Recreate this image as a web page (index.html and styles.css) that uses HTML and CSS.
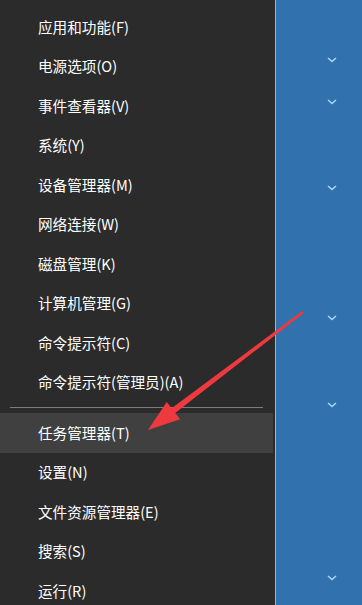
FILE: index.html
```html
<!DOCTYPE html>
<html lang="zh-CN">
<head>
<meta charset="utf-8">
<title>Win+X</title>
<link rel="stylesheet" href="styles.css">
</head>
<body>
<div class="screen">
  <nav class="menu">
    <div class="item">应用和功能(F)</div>
    <div class="item">电源选项(O)</div>
    <div class="item">事件查看器(V)</div>
    <div class="item">系统(Y)</div>
    <div class="item">设备管理器(M)</div>
    <div class="item">网络连接(W)</div>
    <div class="item">磁盘管理(K)</div>
    <div class="item">计算机管理(G)</div>
    <div class="item">命令提示符(C)</div>
    <div class="item">命令提示符(管理员)(A)</div>
    <div class="sep"><span class="sep-line"></span></div>
    <div class="item active">任务管理器(T)</div>
    <div class="item">设置(N)</div>
    <div class="item">文件资源管理器(E)</div>
    <div class="item">搜索(S)</div>
    <div class="item">运行(R)</div>
  </nav>
  <div class="divider"></div>
  <div class="desk">
    <svg class="chev c1" viewBox="0 0 10 6"><path d="M1 1 L5 4.5 L9 1"/></svg>
    <svg class="chev c2" viewBox="0 0 10 6"><path d="M1 1 L5 4.5 L9 1"/></svg>
    <svg class="chev c3" viewBox="0 0 10 6"><path d="M1 1 L5 4.5 L9 1"/></svg>
    <svg class="chev c4" viewBox="0 0 10 6"><path d="M1 1 L5 4.5 L9 1"/></svg>
    <svg class="chev c5" viewBox="0 0 10 6"><path d="M1 1 L5 4.5 L9 1"/></svg>
    <svg class="chev c6" viewBox="0 0 10 6"><path d="M1 1 L5 4.5 L9 1"/></svg>
  </div>
  <svg class="arrow" viewBox="0 0 362 605" width="362" height="605">
    <polygon points="303.8,312.9 302.2,311.1 171.6,408.2 166.7,401.9 148,430 180.1,419.3 175.2,413.0" />
  </svg>
</div>
</body>
</html>
```
FILE: styles.css
```css
html, body {
  margin: 0;
  padding: 0;
}
body {
  width: 362px;
  height: 605px;
  overflow: hidden;
  background: #3071ae;
  font-family: "Noto Sans CJK SC", "Noto Sans", sans-serif;
}
.screen {
  position: relative;
  display: flex;
  width: 362px;
  height: 605px;
}
.menu {
  width: 275px;
  flex: none;
  background: #2b2b2b;
  padding-top: 7.25px;
  box-sizing: border-box;
  display: flex;
  flex-direction: column;
}
.item {
  height: 39.5px;
  flex: none;
  width: 273px;
  display: flex;
  align-items: center;
  padding-left: 38px;
  box-sizing: border-box;
  color: #ffffff;
  font-size: 14.6px;
  line-height: 1;
  white-space: nowrap;
}
.item.active {
  background: #404040;
}
.sep {
  height: 11px;
  flex: none;
  display: flex;
  align-items: center;
  padding-left: 10px;
}
.sep-line {
  display: block;
  width: 253px;
  height: 1px;
  background: #7c7c7c;
}
.divider {
  width: 1px;
  flex: none;
  background: #a9b3bd;
}
.desk {
  position: relative;
  flex: 1;
  background: #3071ae;
}
.chev {
  position: absolute;
  width: 10px;
  height: 6px;
  left: 51px;
  fill: none;
  stroke: #a9d5ff;
  stroke-width: 1.6;
}
.c1 { top: 57px; }
.c2 { top: 99px; }
.c3 { top: 185px; }
.c4 { top: 315px; }
.c5 { top: 402px; }
.c6 { top: 575px; }
.arrow {
  position: absolute;
  left: 0;
  top: 0;
  pointer-events: none;
}
.arrow polygon {
  fill: #ee3a3e;
}
```
